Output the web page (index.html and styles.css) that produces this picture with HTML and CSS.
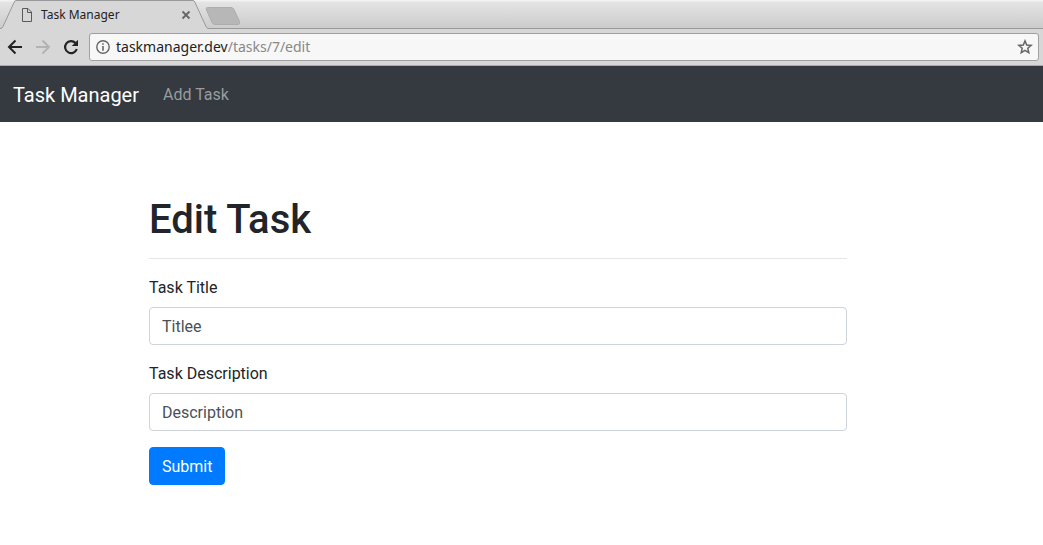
FILE: index.html
```html
<!DOCTYPE html>
<html lang="en">
<head>
  <meta charset="UTF-8" />
  <meta name="viewport" content="width=device-width, initial-scale=1" />
  <title>Task Manager</title>
  <link rel="stylesheet" href="styles.css">
</head>
<body>

<!-- Browser window -->
<div class="browser">
  <div class="tab-strip">
    <svg class="tab-edge" width="16" height="29" viewBox="0 0 16 29">
      <path d="M0 29V28.500C2 28.500 2.500 27.500 3 26.500L14 2.500Q14.700 .5 16 .5V29Z" fill="#d7d7d7"/>
      <path d="M0 28.500C2 28.500 2.500 27.500 3 26.500L14 2.500Q14.700 .5 16 .5" fill="none" stroke="#999"/>
    </svg>
    <div class="tab">
      <svg width="14" height="14" viewBox="0 0 14 14" fill="none" stroke="#5a5a5a">
        <path d="M2.500 .5H8L11.500 4V13.500H2.500ZM7.500 .5V4.500H11.500"/>
      </svg>
      <span class="tab-title">Task Manager</span>
      <button class="tab-close" type="button" aria-label="Close tab">
        <svg width="10" height="10" viewBox="0 0 10 10" stroke="#666" stroke-width="1.800">
          <path d="M1.500 1.500L8.500 8.500M8.500 1.500L1.500 8.500"/>
        </svg>
      </button>
    </div>
    <svg class="tab-edge" width="16" height="29" viewBox="0 0 16 29">
      <path d="M16 29V28.500C14 28.500 13.500 27.500 13 26.500L2 2.500Q1.300 .5 0 .5V29Z" fill="#d7d7d7"/>
      <path d="M16 28.500C14 28.500 13.500 27.500 13 26.500L2 2.500Q1.300 .5 0 .5" fill="none" stroke="#999"/>
    </svg>
    <button class="new-tab" type="button" aria-label="New tab">
      <svg width="36" height="20" viewBox="0 0 36 20">
        <path d="M2.500 1.500H26Q28 1.500 29 3.500L34.500 15.500Q35.500 18.500 33 18.500H10Q8 18.500 7 16.500L1.500 4Q.5 1.500 2.500 1.500Z" fill="#b7b7b7" stroke="#adadad"/>
      </svg>
    </button>
  </div>

  <div class="toolbar">
    <button type="button" aria-label="Back">
      <svg width="16" height="16" viewBox="0 0 16 16" fill="none" stroke="#222" stroke-width="2">
        <path d="M15 8H2.500M8.500 1.500L2 8L8.500 14.500"/>
      </svg>
    </button>
    <button type="button" aria-label="Forward" disabled>
      <svg width="16" height="16" viewBox="0 0 16 16" fill="none" stroke="#b3b3b3" stroke-width="2">
        <path d="M1 8H13.500M7.500 1.500L14 8L7.500 14.500"/>
      </svg>
    </button>
    <button type="button" aria-label="Reload">
      <svg width="16" height="16" viewBox="0 0 16 16">
        <path d="M13.800 10A6 6 0 1 1 12.500 4" fill="none" stroke="#222" stroke-width="2.200"/>
        <path d="M15 .8V7H8.800Z" fill="#222"/>
      </svg>
    </button>
    <div class="address-bar">
      <svg width="14" height="14" viewBox="0 0 14 14">
        <circle cx="7" cy="7" r="6.200" fill="none" stroke="#666" stroke-width="1.400"/>
        <path d="M6.200 3.200H7.800V4.800H6.200ZM6.200 6H7.800V10.800H6.200Z" fill="#666"/>
      </svg>
      <span class="url">taskmanager.dev<span class="url-path">/tasks/7/edit</span></span>
      <button type="button" aria-label="Bookmark">
        <svg width="16" height="16" viewBox="0 0 16 16" fill="none" stroke="#666" stroke-width="1.500">
          <path d="M8 1.900L9.700 6L14.200 6.400L10.800 9.300L11.800 13.700L8 11.400L4.200 13.700L5.200 9.300L1.800 6.400L6.300 6Z"/>
        </svg>
      </button>
    </div>
  </div>
</div>

<nav class="navbar">
  <a class="navbar-brand" href="#">Task Manager</a>
  <a class="nav-link" href="#">Add Task</a>
</nav>

<main class="container">
  <h1>Edit Task</h1>
  <hr>
  <form>
    <div class="form-group">
      <label for="taskTitle">Task Title</label>
      <input type="text" class="form-control" id="taskTitle" name="title" value="Titlee">
    </div>
    <div class="form-group">
      <label for="taskDescription">Task Description</label>
      <input type="text" class="form-control" id="taskDescription" name="description" value="Description">
    </div>
    <button type="submit" class="btn">Submit</button>
  </form>
</main>

</body>
</html>
```
FILE: styles.css
```css
* {
  box-sizing: border-box;
}
body {
  margin: 0;
  font-family: Roboto, sans-serif;
  font-size: 16px;
  line-height: 24px;
  color: #212529;
  background: #fff;
}
svg {
  display: block;
  flex: none;
}

/* Browser window */
.browser {
  font-family: "Noto Sans", sans-serif;
  color: #222;
}
.browser button {
  padding: 0;
  border: 0;
  background: none;
}
.tab-strip {
  display: flex;
  height: 29px;
  background: linear-gradient(#999, #999) bottom / 100% 1px no-repeat,
    linear-gradient(#f2f2f2 1px, #e4e4e4 2px, #cbcbcb);
}
.tab {
  display: flex;
  align-items: center;
  width: 177px;
  padding: 0 2px 0 4px;
  border-top: 1px solid #999;
  background: #d7d7d7;
}
.tab-title {
  flex: 1;
  margin-left: 7px;
  font-size: 12px;
  line-height: 16px;
}
.browser .new-tab {
  align-self: center;
  margin-left: -4px;
  padding-top: 2px;
}
.toolbar {
  display: flex;
  align-items: center;
  gap: 12px;
  height: 37px;
  padding: 0 4px 0 7px;
  border-bottom: 1px solid #aaa;
  background: #d7d7d7;
}
.address-bar {
  display: flex;
  flex: 1;
  align-items: center;
  height: 28px;
  margin-left: -2px;
  padding: 0 5px 0 6px;
  border: 1px solid #a0a0a0;
  border-radius: 3px;
  background: #f7f7f7;
}
.url {
  flex: 1;
  margin-left: 6px;
  font-size: 14px;
  line-height: 20px;
}
.url-path {
  color: #888;
}

/* Task Manager page */
.navbar {
  display: flex;
  align-items: center;
  gap: 24px;
  padding: 9px 13px 7px;
  background: #343a40;
}
.navbar a {
  text-decoration: none;
}
.navbar-brand {
  padding: 5px 0;
  font-size: 20px;
  line-height: 30px;
  color: #fff;
}
.nav-link {
  color: #999c9f;
}
.container {
  padding: 74px 196px 48px 149px;
}
h1 {
  margin: 0 0 8px;
  font-size: 40px;
  font-weight: 500;
  line-height: 48px;
}
hr {
  margin: 14px 0 16px;
  border: 0;
  border-top: 1px solid #e5e5e5;
}
.form-group {
  margin-bottom: 16px;
}
label {
  display: block;
  margin-bottom: 6px;
  line-height: 26px;
}
.form-control {
  display: block;
  width: 100%;
  height: 38px;
  padding: 6px 12px;
  border: 1px solid #ced4da;
  border-radius: 4px;
  font: inherit;
  color: #495057;
  background: #fff;
}
.btn {
  padding: 7px 12px 5px;
  border: 1px solid #007bff;
  border-radius: 4px;
  font: inherit;
  color: #fff;
  background: #007bff;
}
```
